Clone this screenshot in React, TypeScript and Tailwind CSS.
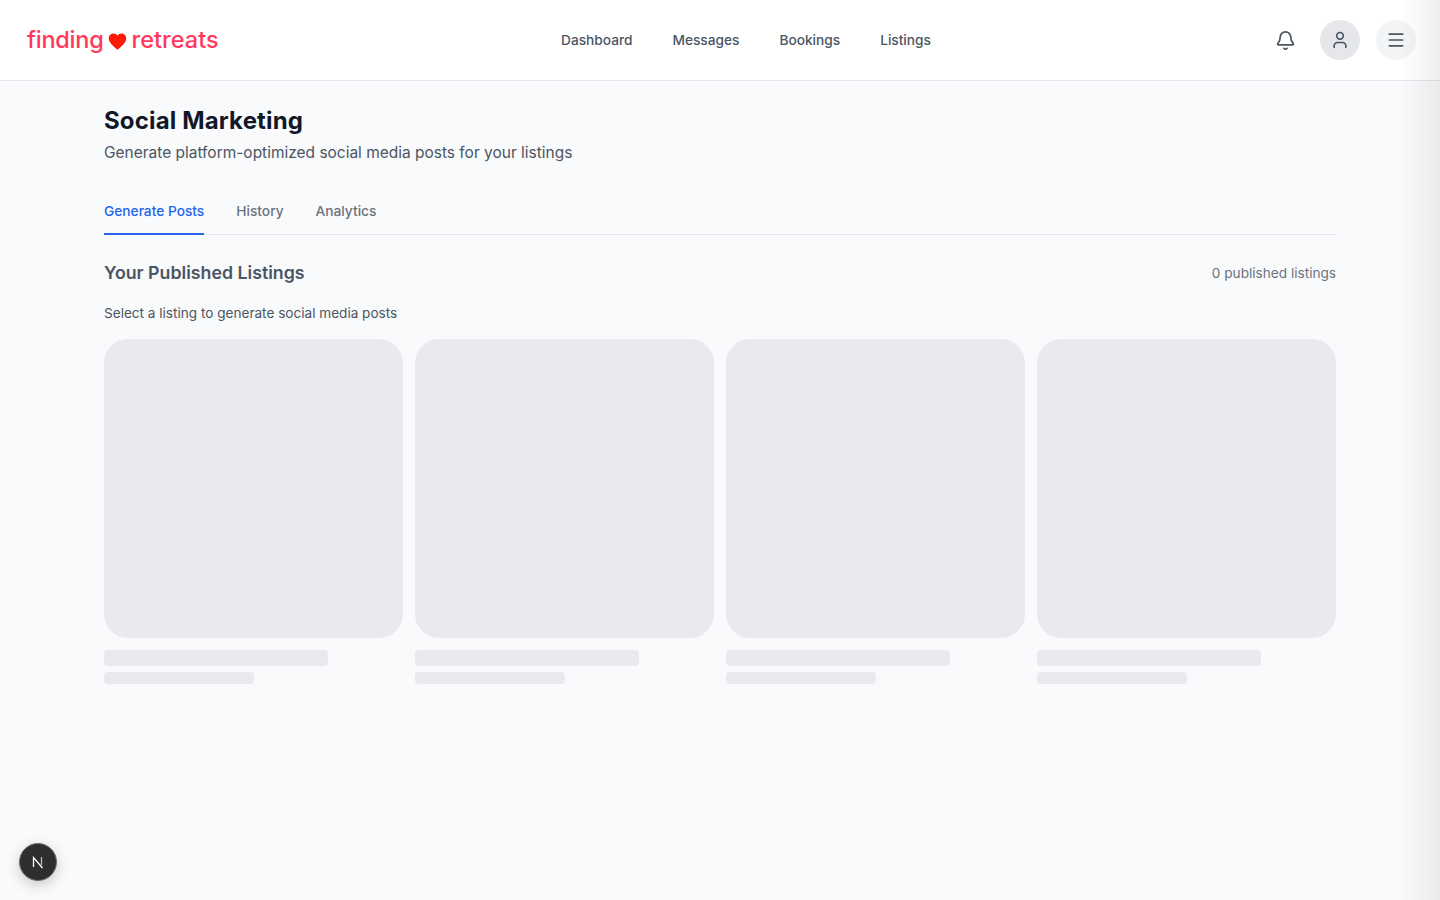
import { Bell, Menu, User } from "lucide-react";

function Skeleton() {
  return (
    <div>
      <div className="aspect-square w-full rounded-3xl bg-[#e9eaed]" />
      <div className="mt-3 h-4 w-3/4 rounded bg-[#e9eaed]" />
      <div className="mt-1.5 h-3 w-1/2 rounded bg-[#e9eaed]" />
    </div>
  );
}

export default function App() {
  return (
    <div className="relative h-[900px] overflow-hidden bg-[#f9fafb] font-['Inter',sans-serif]">
      <header className="flex h-[81px] items-center justify-between border-b border-[#e5e7eb] bg-white pl-[27px] pr-6">
        <div className="flex w-[349px] items-center text-[23.5px] leading-8 font-medium text-[#ff385c]">
          <span className="tracking-[-0.25px]">finding</span>
          <svg viewBox="0 0 24 24" className="ml-[5px] mr-[4px] h-[19px] w-[19px] translate-y-px" fill="#ff1a0a">
            <path d="M12 22.500C5.500 16.800 1 13 1 8.200 1 4.600 3.700 2 7 2c2 0 3.900 1 5 2.800C13.100 3 15 2 17 2c3.300 0 6 2.600 6 6.200 0 4.800-4.500 8.600-11 14.300z" />
          </svg>
          <span className="tracking-[0.05px]">retreats</span>
        </div>
        <nav className="flex gap-10 text-[13.7px] leading-5 font-medium text-[#4b5563]">
          <span>Dashboard</span>
          <span>Messages</span>
          <span>Bookings</span>
          <span>Listings</span>
        </nav>
        <div className="flex w-[300px] items-center justify-end gap-4">
          <div className="flex h-9 w-9 items-center justify-center text-[#4b5563]">
            <Bell size={21} strokeWidth={2} />
          </div>
          <div className="flex h-10 w-10 items-center justify-center rounded-full bg-[#e5e7eb] text-[#4b5563]">
            <User size={20} strokeWidth={2} />
          </div>
          <div className="flex h-10 w-10 items-center justify-center rounded-full bg-[#f3f4f6] text-[#4b5563]">
            <Menu size={20} strokeWidth={2} />
          </div>
        </div>
      </header>

      <main className="mx-auto max-w-[1280px] px-6 pt-6">
        <h1 className="text-2xl leading-8 font-bold tracking-[0.15px] text-[#111827]">Social Marketing</h1>
        <p className="mt-1 text-[15.47px] leading-6 text-[#4b5563]">
          Generate platform-optimized social media posts for your listings
        </p>

        <div className="mt-[23px] flex gap-8 border-b border-[#e5e7eb] text-[13.72px] leading-5 font-medium text-[#6b7280]">
          <span className="-mb-px border-b-2 border-[#2563eb] pt-[13px] pb-[12px] text-[#2563eb]">Generate Posts</span>
          <span className="pt-[13px] pb-[12px]">History</span>
          <span className="pt-[13px] pb-[12px]">Analytics</span>
        </div>

        <div className="mt-6 flex items-center justify-between">
          <h2 className="text-[17.75px] leading-7 font-semibold text-[#4b5563]">Your Published Listings</h2>
          <span className="text-[13.62px] leading-5 text-[#6b7280]">0 published listings</span>
        </div>
        <p className="mt-4 text-[13.58px] leading-5 text-[#4b5563]">Select a listing to generate social media posts</p>

        <div className="mt-4 grid grid-cols-4 gap-3">
          <Skeleton />
          <Skeleton />
          <Skeleton />
          <Skeleton />
        </div>
      </main>

      <div className="absolute top-0 right-0 h-full w-[40px] bg-gradient-to-r from-transparent to-[#00000010]" />

      <div className="absolute bottom-[19px] left-[19px] flex h-[38px] w-[38px] items-center justify-center rounded-full border border-[#6b6b6b] bg-[#2e2e2e] shadow-[0_4px_14px_rgba(0,0,0,0.2)]">
        <svg viewBox="0 0 16 16" className="h-4 w-4" fill="none">
          <path d="M3.500 13V3.500L12.500 14" stroke="#fff" strokeWidth="1.300" />
          <path d="M11.500 3v8" stroke="#bbb" strokeWidth="1.300" />
        </svg>
      </div>
    </div>
  );
}
